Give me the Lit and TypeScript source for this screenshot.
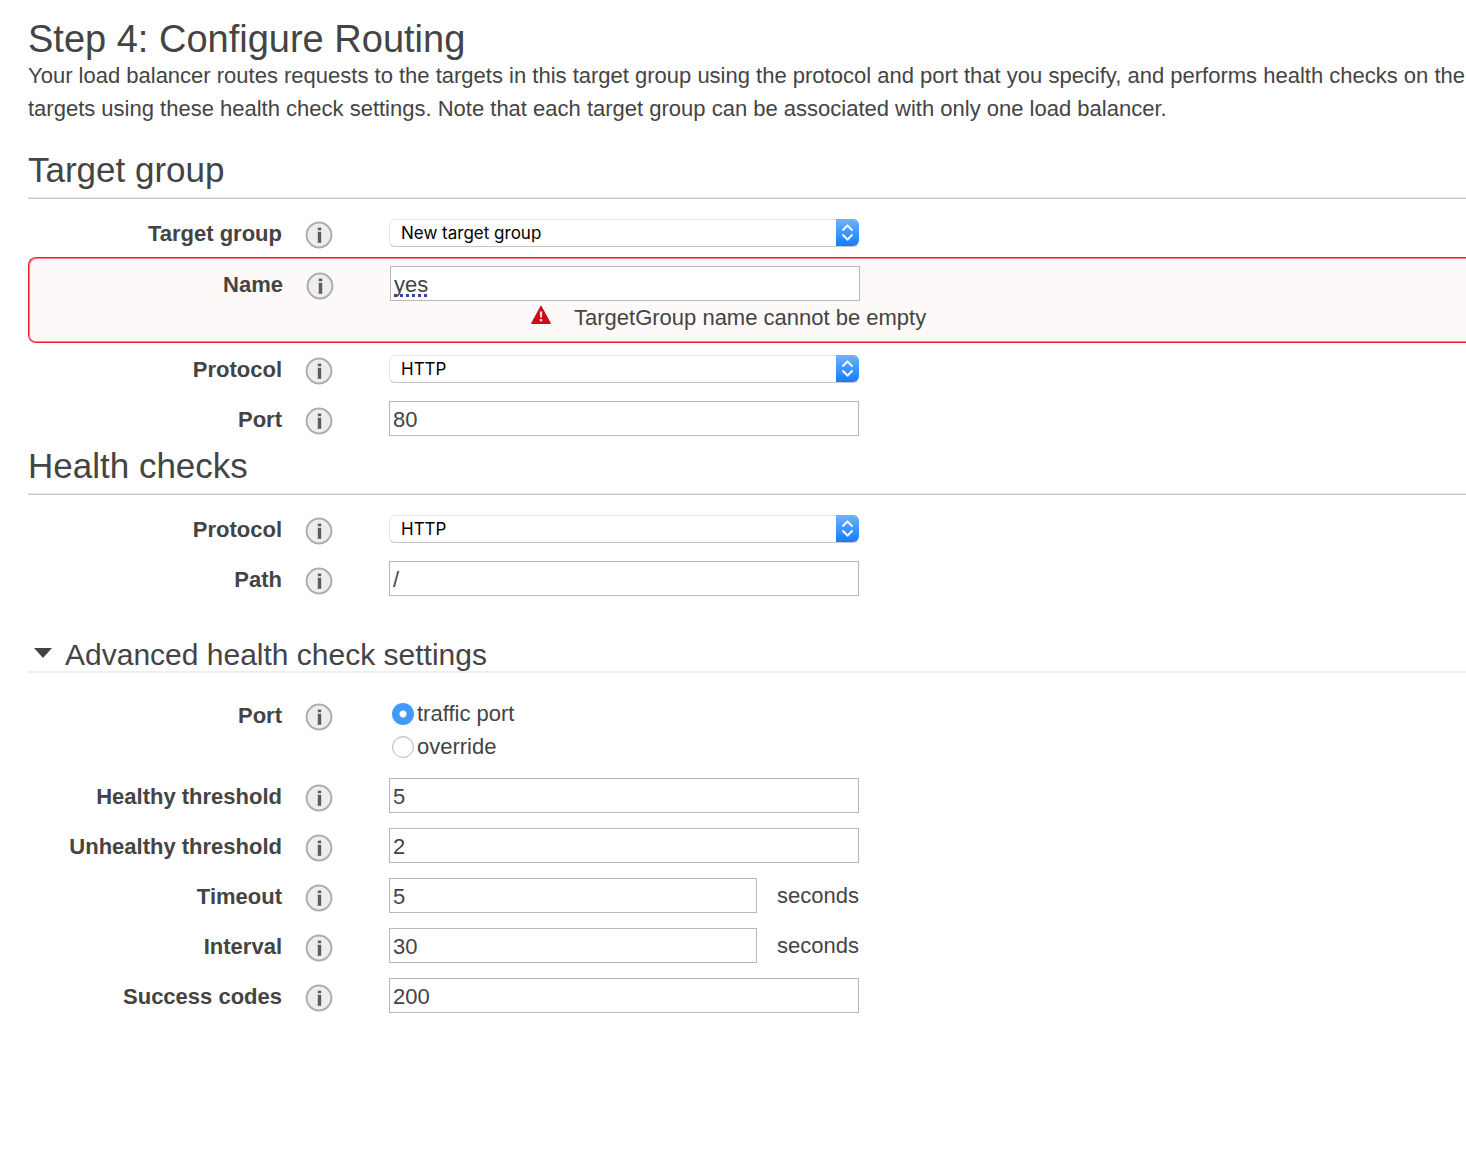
import { LitElement, html, css, svg, nothing } from "lit";
import { customElement, property, state } from "lit/decorators.js";

const infoIcon = svg`
  <svg viewBox="0 0 28 28" width="28" height="28" aria-hidden="true">
    <circle cx="14" cy="14" r="12.4" fill="#eeeeee" stroke="#aeaeae" stroke-width="2" />
    <rect x="12.8" y="6.6" width="3.4" height="2.6" fill="#5c5c5c" />
    <rect x="12.8" y="10.8" width="3.4" height="11" fill="#5c5c5c" />
    <path d="M11.8 11.3h1M11.8 21.3h1" stroke="#b0b0b0" stroke-width="1" />
  </svg>`;

@customElement("form-row")
class FormRow extends LitElement {
  @property() label = "";
  @property() kind: "text" | "select" | "radio" = "text";
  @property() value = "";
  @property() unit = "";
  @property() error = "";
  @property({ type: Array }) options: string[] = [];

  static styles = css`
    :host {
      display: block;
    }
    .row {
      display: grid;
      grid-template-columns: 254px 28px minmax(0, 470px);
      column-gap: 23px;
      align-items: start;
      padding: 8px 0 7px;
    }
    .invalid {
      border: 1px solid #f81828;
      border-right: 0;
      border-radius: 8px 0 0 8px;
      background: #fdf9f8;
      box-shadow: inset 1px 1px #fb8088, inset 0 -1px #fb8088;
      padding: 8px 0;
    }
    .label {
      font-weight: 700;
      text-align: right;
      line-height: 37px;
      margin-bottom: -2px;
    }
    .info {
      border: 0;
      padding: 0;
      margin-top: 6px;
      background: none;
      width: 28px;
      height: 28px;
    }
    .info svg {
      display: block;
    }
    .control {
      display: flex;
      align-items: center;
      gap: 20px;
      min-height: 35px;
      margin-left: 33px;
      margin-right: -33px;
    }
    .text {
      flex: 1;
      min-width: 0;
      box-sizing: border-box;
      height: 35px;
      margin: 0;
      padding: 2px 3px 0;
      border: 1px solid #b8b8b8;
      border-radius: 0;
      background: #fff;
      color: #444;
      font: inherit;
    }
    .invalid .text {
      text-decoration: underline dotted 3px #3a3fae;
      text-decoration-skip-ink: none;
      text-underline-offset: 2px;
    }
    .picker {
      flex: 1;
      display: grid;
      grid-template-columns: 1fr 23px;
      height: 28px;
    }
    .select {
      grid-area: 1 / 1 / 2 / 3;
      appearance: none;
      box-sizing: border-box;
      width: 100%;
      height: 28px;
      margin: 0;
      padding: 0 30px 0 11px;
      border: 1px solid #e2e2e2;
      border-bottom-color: #c6c6c6;
      border-radius: 6px;
      background: #fff;
      color: #000;
      font: 17px Inter, sans-serif;
    }
    .arrows {
      grid-area: 1 / 2;
      display: block;
      pointer-events: none;
      z-index: 1;
      height: 27px;
      border-radius: 0 6px 6px 0;
      background: linear-gradient(#6db3fa, #147cfc);
    }
    .radios {
      flex: 1;
      display: grid;
      grid-auto-rows: 33px;
    }
    .option {
      display: flex;
      align-items: center;
      gap: 3px;
      padding-left: 3px;
    }
    .radio {
      appearance: none;
      box-sizing: border-box;
      width: 22px;
      height: 22px;
      margin: 0;
      border: 1px solid #bcbcbc;
      border-radius: 50%;
      background: #fff;
      box-shadow: inset 0 1px 1px #e4e4e4;
    }
    .radio:checked {
      border: 0;
      background: radial-gradient(circle, #fff 3px, #429bfa 4px);
      box-shadow: none;
    }
    .error {
      grid-column: 3;
      display: flex;
      align-items: center;
      gap: 22px;
      margin-left: 173px;
      margin-right: -33px;
      line-height: 33px;
      white-space: nowrap;
    }
    .warn {
      flex: none;
      margin-bottom: 5px;
    }
  `;

  private control() {
    if (this.kind === "select") {
      return html`<div class="picker">
        <select class="select" id="field">
          ${this.options.map((o) => html`<option>${o}</option>`)}
        </select>
        <svg class="arrows" viewBox="0 0 23 27" width="23" height="27" aria-hidden="true">
          <path
            d="M7 11l4.5-4.7L16 11M7 16l4.5 4.7L16 16"
            fill="none"
            stroke="#fff"
            stroke-width="1.9"
            stroke-linecap="round"
            stroke-linejoin="round"
          />
        </svg>
      </div>`;
    }
    if (this.kind === "radio") {
      return html`<div class="radios" role="radiogroup" aria-labelledby="caption">
        ${this.options.map(
          (o) => html`<label class="option">
            <input class="radio" type="radio" name="choice" .checked=${o === this.value} />${o}
          </label>`
        )}
      </div>`;
    }
    return html`<input class="text" id="field" type="text" .value=${this.value} />
      ${this.unit ? html`<span>${this.unit}</span>` : nothing}`;
  }

  render() {
    return html`<div class="row ${this.error ? "invalid" : ""}">
      ${this.kind === "radio"
        ? html`<span class="label" id="caption">${this.label}</span>`
        : html`<label class="label" for="field">${this.label}</label>`}
      <button class="info" type="button" aria-label="About ${this.label}">${infoIcon}</button>
      <div class="control">${this.control()}</div>
      ${this.error
        ? html`<div class="error" role="alert">
            <svg class="warn" viewBox="0 0 22 20" width="22" height="20" aria-hidden="true">
              <path d="M11 1L20.5 18.5h-19z" fill="#cc0c18" stroke="#cc0c18" stroke-linejoin="round" />
              <path d="M9.7 6.5h2.6l-.4 6h-1.8z" fill="#f8d8d8" />
              <rect x="9.8" y="14" width="2.4" height="2.4" fill="#f8d8d8" />
            </svg>
            <span>${this.error}</span>
          </div>`
        : nothing}
    </div>`;
  }
}

@customElement("app-root")
class AppRoot extends LitElement {
  @state() private open = true;

  static styles = css`
    :host {
      display: block;
      min-height: 100vh;
      background: #fff;
      color: #444;
      font: 22px/33px "Liberation Sans", Arial, sans-serif;
    }
    .page {
      padding: 19px 0 24px 28px;
      overflow: hidden;
    }
    .title,
    .heading,
    .advanced {
      margin: 0;
      font-weight: 400;
    }
    .title {
      font-size: 38px;
      line-height: 40px;
    }
    .intro {
      margin: 0 0 25px;
      white-space: nowrap;
    }
    .heading {
      margin-bottom: 8px;
      padding-bottom: 8px;
      border-bottom: 1px solid #c8c8c8;
      box-shadow: inset 0 -1px #e8e8e8;
      font-size: 35px;
      line-height: 40px;
    }
    .section {
      padding-bottom: 3px;
    }
    .advanced {
      margin: 36px 0 16px;
      border-bottom: 2px solid #eee;
      font-size: 30px;
      line-height: 32px;
    }
    .toggle {
      display: flex;
      align-items: center;
      gap: 13px;
      padding: 0 0 0 6px;
      border: 0;
      background: none;
      color: inherit;
      font: inherit;
    }
    .caret {
      margin-bottom: 4px;
    }
  `;

  render() {
    return html`<main class="page">
      <h1 class="title">Step 4: Configure Routing</h1>
      <p class="intro">
        Your load balancer routes requests to the targets in this target group using the protocol and port that you
        specify, and performs health checks on the<br />
        targets using these health check settings. Note that each target group can be associated with only one load
        balancer.
      </p>
      <section class="section">
        <h2 class="heading">Target group</h2>
        <form-row label="Target group" kind="select" .options=${["New target group"]}></form-row>
        <form-row label="Name" value="yes" error="TargetGroup name cannot be empty"></form-row>
        <form-row label="Protocol" kind="select" .options=${["HTTP"]}></form-row>
        <form-row label="Port" value="80"></form-row>
      </section>
      <section>
        <h2 class="heading">Health checks</h2>
        <form-row label="Protocol" kind="select" .options=${["HTTP"]}></form-row>
        <form-row label="Path" value="/"></form-row>
        <h3 class="advanced">
          <button
            class="toggle"
            type="button"
            aria-expanded=${this.open ? "true" : "false"}
            @click=${() => (this.open = !this.open)}
          >
            <svg class="caret" viewBox="0 0 18 10" width="18" height="10" aria-hidden="true">
              <path d="M0 0h18L9 10z" fill="#444" />
            </svg>
            Advanced health check settings
          </button>
        </h3>
        ${this.open
          ? html`<form-row
                label="Port"
                kind="radio"
                value="traffic port"
                .options=${["traffic port", "override"]}
              ></form-row>
              <form-row label="Healthy threshold" value="5"></form-row>
              <form-row label="Unhealthy threshold" value="2"></form-row>
              <form-row label="Timeout" value="5" unit="seconds"></form-row>
              <form-row label="Interval" value="30" unit="seconds"></form-row>
              <form-row label="Success codes" value="200"></form-row>`
          : nothing}
      </section>
    </main>`;
  }
}
